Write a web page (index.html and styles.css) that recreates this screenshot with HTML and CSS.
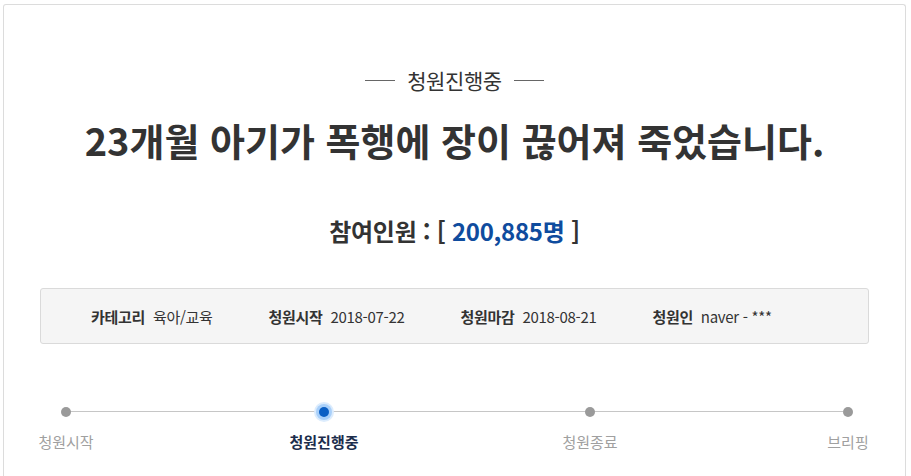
FILE: index.html
```html
<!DOCTYPE html>
<html lang="ko">
  <head>
    <meta charset="UTF-8" />
    <meta name="viewport" content="width=device-width, initial-scale=1.0">
    <title>청와대 국민청원</title>
    <link rel="stylesheet" href="styles.css">
  </head>
  <body>
    <div class="petition">
      <p class="status"><span>청원진행중</span></p>
      <h1 class="title">23개월 아기가 폭행에 장이 끊어져 죽었습니다.</h1>
      <h2 class="count">참여인원 : [ <span class="num">200,885명</span> ]</h2>

      <ul class="info">
        <li><b>카테고리</b> 육아/교육</li>
        <li><b>청원시작</b> 2018-07-22</li>
        <li><b>청원마감</b> 2018-08-21</li>
        <li><b>청원인</b> naver - ***</li>
      </ul>

      <ol class="steps">
        <li class="step"><i class="dot"></i>청원시작</li>
        <li class="step on"><i class="dot"></i>청원진행중</li>
        <li class="step"><i class="dot"></i>청원종료</li>
        <li class="step"><i class="dot"></i>브리핑</li>
      </ol>
    </div>
  </body>
</html>
```

FILE: styles.css
```css
body, html {
  margin: 0;
  height: 100%;
  overflow: hidden;
}

body {
  background: #fff;
  font-family: "Noto Sans CJK KR", "Noto Sans", sans-serif;
  color: #333;
}

.petition {
  margin: 4px 5px 0 3px;
  height: 100%;
  border: 1px solid #dcdcdc;
  border-bottom: 0;
  border-radius: 3px 3px 0 0;
  padding: 0 36px;
}

.status {
  margin: 57px 0 0;
  display: flex;
  justify-content: center;
  align-items: center;
  gap: 12px;
  font-size: 21px;
  letter-spacing: -0.4px;
  line-height: 36px;
  color: #333;
}

.status::before,
.status::after {
  content: "";
  width: 30px;
  height: 1px;
  background: #666;
}

.title {
  margin: 14px 0 0;
  text-align: center;
  font-size: 38px;
  font-weight: 700;
  line-height: 56px;
  color: #333;
}

.count {
  margin: 47px 0 0;
  text-align: center;
  font-size: 24px;
  font-weight: 700;
  letter-spacing: -0.3px;
  line-height: 32px;
  color: #333;
}

.count .num {
  color: #0f4c9e;
}

.info {
  list-style: none;
  margin: 41px 0 0;
  padding: 0 0 0 50px;
  height: 54px;
  display: flex;
  align-items: center;
  gap: 56px;
  background: #f5f5f5;
  border: 1px solid #dadada;
  border-radius: 3px;
  font-size: 15px;
  letter-spacing: -0.3px;
  color: #333;
}

.info b {
  margin-right: 4px;
}

.steps {
  list-style: none;
  position: relative;
  margin: 57px -5px 0 0;
  padding: 0;
  display: flex;
}

.steps::before {
  content: "";
  position: absolute;
  left: 26px;
  right: 31px;
  top: 10px;
  height: 1px;
  background: #c6c6c6;
}

.step {
  width: 52px;
  display: flex;
  flex-direction: column;
  align-items: center;
  white-space: nowrap;
  font-size: 15px;
  line-height: 22px;
  color: #a0a0a0;
}

.step + .step {
  margin-left: auto;
}

.step:nth-child(2) {
  margin-right: 8px;
}

.dot {
  position: relative;
  width: 10px;
  height: 10px;
  margin: 6px 0 14px;
  border-radius: 50%;
  background: #9a9a9a;
}

.step.on {
  color: #1c2d4c;
  font-weight: 700;
}

.step.on .dot {
  background: #0b5fc4;
  box-shadow: 0 0 0 3px #a9d0fa, 0 0 0 5px #dcecfd;
}
```
